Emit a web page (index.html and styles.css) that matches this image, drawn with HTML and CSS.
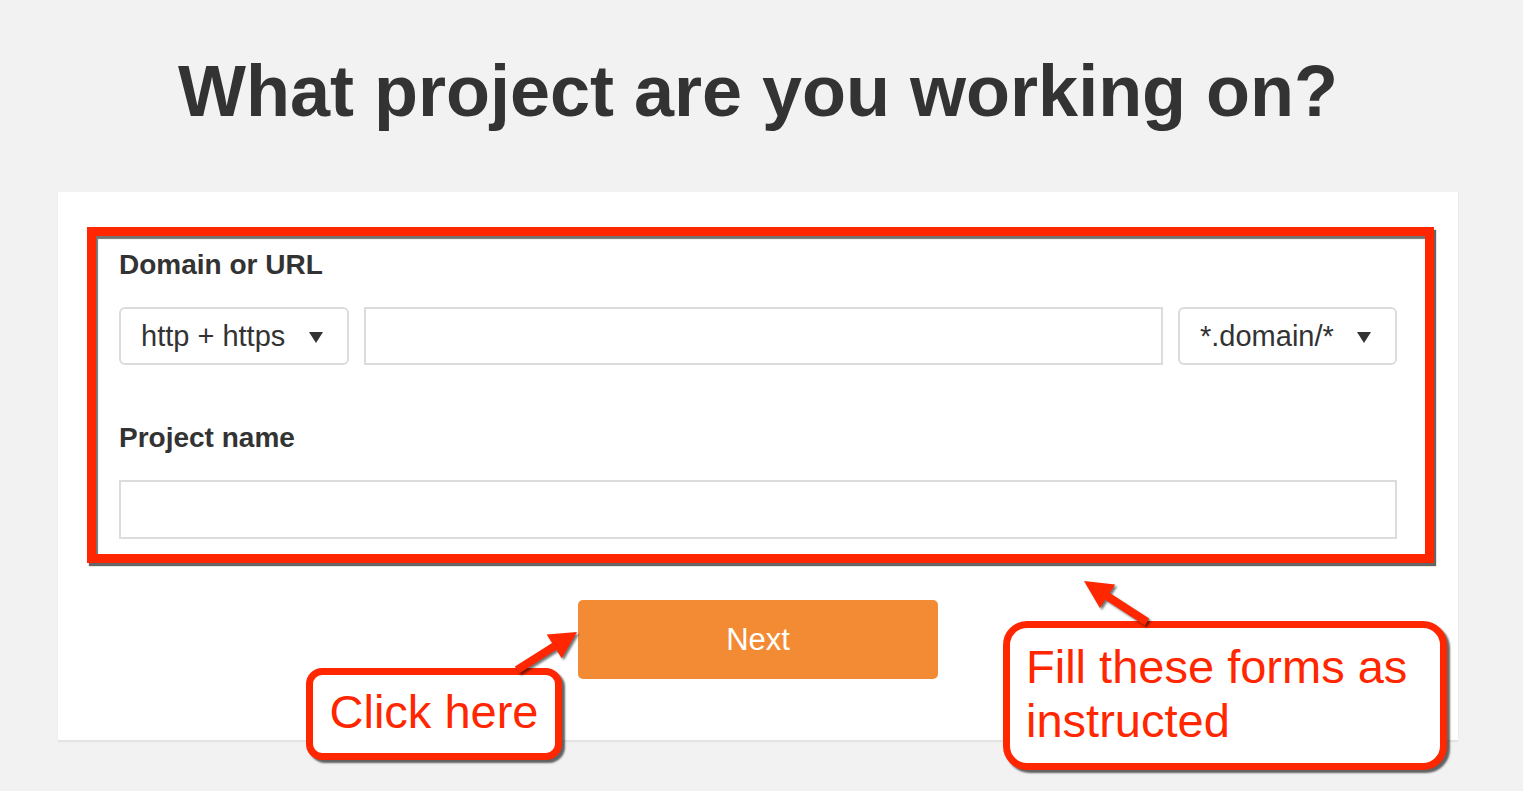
FILE: index.html
```html
<!DOCTYPE html>
<html lang="en">
<head>
<meta charset="utf-8">
<title>What project are you working on?</title>
<link rel="stylesheet" href="styles.css">
</head>
<body>
<div class="page">
  <h1 class="title">What project are you working on?</h1>
  <div class="card">
    <div class="field">
      <div class="label">Domain or URL</div>
      <div class="url-row">
        <div class="select select-protocol"><span>http + https</span><i class="caret"></i></div>
        <div class="input input-url"></div>
        <div class="select select-scope"><span>*.domain/*</span><i class="caret"></i></div>
      </div>
    </div>
    <div class="field field-name">
      <div class="label">Project name</div>
      <div class="input input-name"></div>
    </div>
    <div class="actions">
      <button class="btn-next">Next</button>
    </div>

    <div class="annot-frame"></div>
    <div class="callout callout-click">Click here</div>
    <div class="callout callout-fill">Fill these forms as<br>instructed</div>
  </div>
  <svg class="arrows" width="1523" height="791" viewBox="0 0 1523 791">
    <polygon points="514.9,666.6 552.1,643.0 546.7,634.6 577,632 561.7,658.2 556.3,649.8 519.1,673.4" />
    <polygon points="1149.2,618.6 1109.7,592.9 1115.1,584.6 1084,581 1099.9,608.0 1105.3,599.7 1144.8,625.4" />
  </svg>
</div>
</body>
</html>
```
FILE: styles.css
```css
* { box-sizing: border-box; }
html, body {
  margin: 0;
  padding: 0;
  background: #f2f2f2;
  font-family: "Liberation Sans", Arial, Helvetica, sans-serif;
  color: #333;
}
.page {
  position: relative;
  width: 1523px;
  height: 791px;
  padding-top: 50px;
  overflow: hidden;
}
.title {
  width: 1400px;
  margin: 0 0 0 58px;
  font-size: 72px;
  line-height: 82px;
  font-weight: bold;
  text-align: center;
  color: #333;
}
.card {
  position: relative;
  width: 1400px;
  margin: 60px 0 0 58px;
  background: #fff;
  padding: 56px 61px 61px 61px;
  box-shadow: 0 2px 1px #e3e3e3, 1px 0 0 #ececec;
}
.label {
  font-size: 28px;
  line-height: 34px;
  font-weight: bold;
  color: #333;
}
.url-row {
  display: flex;
  gap: 15px;
  margin-top: 25px;
  height: 58px;
}
.select {
  display: flex;
  align-items: center;
  justify-content: space-between;
  height: 58px;
  border: 2px solid #dcdcdc;
  border-radius: 6px;
  padding: 0 24px 0 20px;
  font-size: 29px;
  color: #333;
  background: #fff;
}
.select-protocol { width: 230px; }
.select-scope { width: 219px; }
.caret {
  display: block;
  width: 0;
  height: 0;
  border-left: 7.5px solid transparent;
  border-right: 7.5px solid transparent;
  border-top: 11px solid #333;
  margin-top: 2px;
}
.input {
  border: 2px solid #dcdcdc;
  background: #fff;
}
.input-url { flex: 1; height: 58px; }
.field-name { margin-top: 56px; }
.input-name { margin-top: 25px; height: 59px; }
.actions {
  display: flex;
  justify-content: center;
  margin-top: 61px;
}
.btn-next {
  width: 360px;
  height: 79px;
  border: 0;
  border-radius: 5px;
  background: #f28b34;
  color: #fff;
  font-family: "Liberation Sans", Arial, Helvetica, sans-serif;
  font-size: 31px;
  padding: 0;
}
.annot-frame {
  position: absolute;
  left: 29px;
  top: 35px;
  width: 1347px;
  height: 336px;
  border: 9px solid #ff2600;
  box-shadow: 2px 3px 1px rgba(0,0,0,0.6), inset 2px 3px 1px rgba(0,0,0,0.55);
}
.callout {
  position: absolute;
  background: #fff;
  border: 7px solid #ff2600;
  color: #ff2600;
  font-size: 47px;
  box-shadow: 3px 3px 2px rgba(0,0,0,0.6);
}
.callout-click {
  left: 248px;
  top: 476px;
  width: 256px;
  height: 92px;
  border-radius: 16px;
  display: flex;
  align-items: center;
  justify-content: center;
  line-height: 54px;
  padding-bottom: 4px;
}
.callout-fill {
  left: 945px;
  top: 429px;
  width: 444px;
  height: 149px;
  border-radius: 24px;
  line-height: 54px;
  padding: 12px 0 0 16px;
}
.arrows {
  position: absolute;
  left: 0;
  top: 0;
  pointer-events: none;
  filter: drop-shadow(2px 2px 1px rgba(0,0,0,0.55));
}
.arrows polygon { fill: #ff2600; }
```
